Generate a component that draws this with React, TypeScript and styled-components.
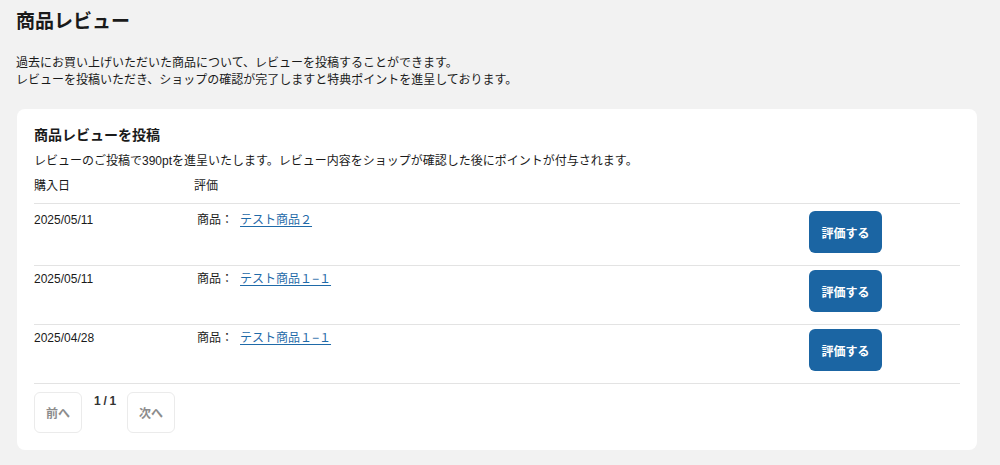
import React from 'react';
import styled, { createGlobalStyle } from 'styled-components';

const GlobalStyle = createGlobalStyle`
  body {
    margin: 0;
    background: #f2f2f2;
    color: #1a1a1a;
    font-family: "Liberation Sans", "Noto Sans CJK JP", sans-serif;
  }
`;

const Page = styled.div`
  padding: 10px 23px 14px 16px;
`;

const PageTitle = styled.h1`
  margin: 0;
  font-size: 19px;
  line-height: 24px;
  font-weight: 700;
`;

const Lead = styled.p`
  margin: 21px 0 0;
  font-size: 12px;
  line-height: 17px;
`;

const Card = styled.section`
  margin-top: 20px;
  margin-left: 1px;
  background: #fff;
  border-radius: 8px;
  padding: 16px 17px 17px;
`;

const CardTitle = styled.h2`
  margin: 0;
  font-size: 14px;
  line-height: 20px;
  font-weight: 700;
`;

const Note = styled.p`
  margin: 8px 0 0;
  font-size: 12px;
  line-height: 17px;
`;

const Grid = styled.div`
  display: grid;
  grid-template-columns: 160px 1fr 151px;
  align-items: start;
  border-bottom: 1px solid #e3e3e3;
  font-size: 12px;
  line-height: 17px;
`;

const HeadRow = styled(Grid)`
  margin-top: 8px;
  padding-bottom: 8px;
`;

const Row = styled(Grid)<{ $first?: boolean }>`
  padding: ${({ $first }) => ($first ? '7px' : '4px')} 0 12px;
`;

const Cell = styled.span`
  padding-top: 1px;
`;

const Product = styled.div`
  display: flex;
  gap: 7px;
  margin-left: 3px;
  padding-top: 1px;
`;

const ProductLink = styled.a`
  color: #1f6aa8;
  text-decoration: underline;
  text-underline-offset: 2px;
`;

const RateButton = styled.button`
  width: 73px;
  height: 42px;
  border: none;
  border-radius: 6px;
  background: #1b65a3;
  color: #fff;
  font-family: inherit;
  font-size: 12px;
  font-weight: 700;
  cursor: pointer;
`;

const Pager = styled.div`
  display: flex;
  align-items: flex-start;
  gap: 12px;
  margin-top: 8px;
`;

const PagerButton = styled.button`
  width: 48px;
  height: 41px;
  background: #fff;
  border: 1px solid #ebebeb;
  border-radius: 6px;
  color: #8c8c8c;
  font-family: inherit;
  font-size: 12px;
  font-weight: 700;
`;

const PageCount = styled.span`
  width: 21px;
  padding-top: 1px;
  white-space: nowrap;
  font-size: 12px;
  line-height: 17px;
  font-weight: 700;
  letter-spacing: -0.3px;
  color: #333;
`;

const reviews = [
  { date: '2025/05/11', name: 'テスト商品２' },
  { date: '2025/05/11', name: 'テスト商品１−１' },
  { date: '2025/04/28', name: 'テスト商品１−１' },
];

const App: React.FC = () => (
  <Page>
    <GlobalStyle />
    <PageTitle>商品レビュー</PageTitle>
    <Lead>
      過去にお買い上げいただいた商品について、レビューを投稿することができます。
      <br />
      レビューを投稿いただき、ショップの確認が完了しますと特典ポイントを進呈しております。
    </Lead>
    <Card>
      <CardTitle>商品レビューを投稿</CardTitle>
      <Note>レビューのご投稿で390ptを進呈いたします。レビュー内容をショップが確認した後にポイントが付与されます。</Note>
      <HeadRow>
        <span>購入日</span>
        <span>評価</span>
        <span />
      </HeadRow>
      {reviews.map((r, i) => (
        <Row key={i} $first={i === 0}>
          <Cell>{r.date}</Cell>
          <Product>
            <span>商品：</span>
            <ProductLink href="#">{r.name}</ProductLink>
          </Product>
          <div>
            <RateButton>評価する</RateButton>
          </div>
        </Row>
      ))}
      <Pager>
        <PagerButton disabled>前へ</PagerButton>
        <PageCount>1 / 1</PageCount>
        <PagerButton disabled>次へ</PagerButton>
      </Pager>
    </Card>
  </Page>
);

export default App;
